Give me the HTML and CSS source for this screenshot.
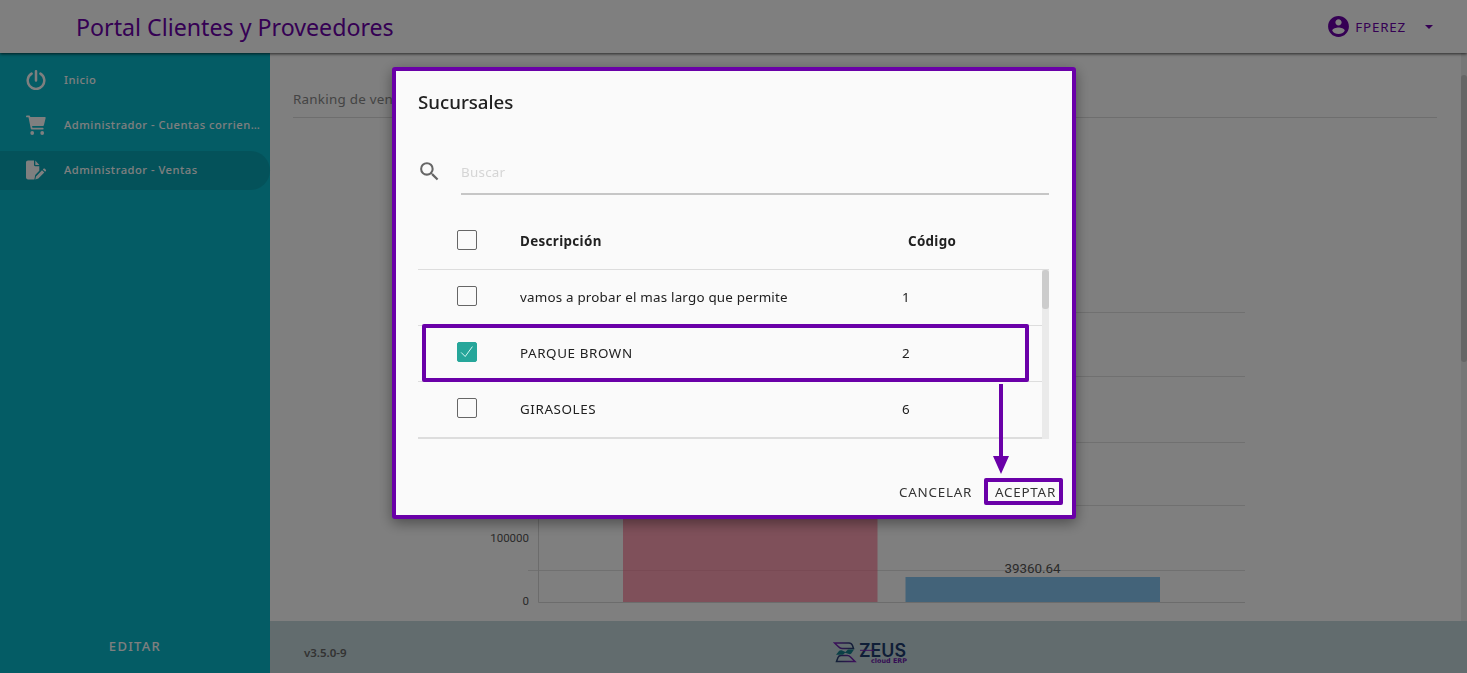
FILE: index.html
```
<!DOCTYPE html>
<html lang="es">
<head>
    <meta charset="UTF-8">
    <meta name="viewport" content="width=device-width, initial-scale=1.0">
    <title>Portal Clientes y Proveedores</title>
    <link rel="stylesheet" href="styles.css">
</head>
<body>
    <header class="topbar">
        <h1 class="topbar-title">Portal Clientes y Proveedores</h1>
        <div class="user-menu">
            <svg class="user-icon" viewBox="0 0 24 24"><path d="M12 2C6.48 2 2 6.48 2 12s4.48 10 10 10 10-4.48 10-10S17.52 2 12 2zm0 3c1.66 0 3 1.34 3 3s-1.34 3-3 3-3-1.34-3-3 1.34-3 3-3zm0 14.2c-2.5 0-4.71-1.28-6-3.22.03-1.99 4-3.08 6-3.08 1.99 0 5.97 1.09 6 3.08-1.29 1.94-3.5 3.22-6 3.22z"/></svg>
            <span class="user-name">FPEREZ</span>
            <svg class="caret" viewBox="0 0 8 4"><path d="M0 0h8L4 4z"/></svg>
        </div>
    </header>

    <div class="layout">
        <nav class="sidebar">
            <ul class="menu">
                <li class="menu-item">
                    <svg class="menu-icon" viewBox="0 0 20 20"><path d="M5.6 3.6A8.3 8.3 0 1 0 14.4 3.6M10 1.2v9.2" fill="none" stroke="currentColor" stroke-width="2.5" stroke-linecap="round"/></svg>
                    <span class="menu-label">Inicio</span>
                </li>
                <li class="menu-item">
                    <svg class="menu-icon" viewBox="0 0 20 20"><path d="M.9.5h2.3c.5 0 .8.3.9.8L4.300 2H18.800c.6 0 1 .6.8 1.200l-1.700 7c-.1.500-.5.800-1 .8H6.100l.3 1.800h10.300c.6 0 .9.4.9.9s-.3.9-.9.9H5.700c-.5 0-.9-.3-.9-.8L2.500 2.300H.9C.3 2.300 0 1.900 0 1.400S.3.500.9.500z"/><circle cx="6.200" cy="18" r="1.900"/><circle cx="16.200" cy="18" r="1.900"/></svg>
                    <span class="menu-label">Administrador - Cuentas corrientes</span>
                </li>
                <li class="menu-item active">
                    <svg class="menu-icon" viewBox="0 0 20 20"><path d="M2 .5h6v4.600c0 .6.5 1.100 1.100 1.100h4.200v4.500l-4.100 4.300-.8 4.500H2c-1.100 0-2-.8-2-1.900V2.500C0 1.300.9.500 2 .5z"/><path d="M9.300.5l4 4.500h-4z"/><path d="M16 10.300l2.300 2.300-6 6-3 .8.700-3zM16.800 9.500l.7-.7c.4-.4 1-.4 1.400 0l.9.9c.4.4.4 1 0 1.400l-.7.7z"/></svg>
                    <span class="menu-label">Administrador - Ventas</span>
                </li>
            </ul>
            <button class="edit-button">EDITAR</button>
        </nav>

        <div class="content">
            <div class="scroll-area">
                <main class="panel">
                    <h2 class="panel-title">Ranking de ventas</h2>
                    <svg class="chart" viewBox="0 0 780 400">
                        <g class="grid">
                            <path d="M52 93.500H769M52 157.500H769M52 223.500H769M52 286.500H769M52 351.500H769"/>
                            <path class="axis" d="M62.500 30V383.500H769"/>
                        </g>
                        <rect class="bar-pink" x="147" y="60" width="254.500" height="323"/>
                        <rect class="bar-blue" x="429.500" y="358" width="254.500" height="25"/>
                        <text class="tick" x="53" y="323" text-anchor="end">100000</text>
                        <text class="tick" x="53" y="386" text-anchor="end">0</text>
                        <text class="bar-value" x="556.500" y="354" text-anchor="middle">39360.64</text>
                    </svg>
                </main>
                <div class="page-scrollbar"><div class="page-thumb"></div></div>
            </div>
            <footer class="footer">
                <span class="version">v3.5.0-9</span>
                <svg class="logo" viewBox="0 0 76 24">
                    <defs>
                        <linearGradient id="mark" x1="0" x2="1">
                            <stop offset="0" stop-color="#7a1fb8"/>
                            <stop offset="1" stop-color="#25406e"/>
                        </linearGradient>
                        <linearGradient id="mark-end" x1="0" x2="1">
                            <stop offset="0" stop-color="#25406e"/>
                            <stop offset="1" stop-color="#7a1fb8"/>
                        </linearGradient>
                    </defs>
                    <path d="M1.500 2H16q2.500 0 3.500 2.500l1 3H9q-2 0-3.500-1.700z" fill="none" stroke="url(#mark)" stroke-width="1.500"/>
                    <path d="M3.500 20.500L5 16.500q.8-2 3-2h6.500q1.500 0 3 1.500l4.500 4.500z" fill="none" stroke="url(#mark-end)" stroke-width="1.500"/>
                    <path d="M3 13.700l3-3.700q1-1 2.500-.7l4 1.700 2.500-2.500h6l-2.500 3.700q-1 1.300-2.500.8l-4-1.200-2 1.900z" fill="#16808c"/>
                    <text class="logo-name" x="26" y="16" textLength="47" lengthAdjust="spacingAndGlyphs">ZEUS</text>
                    <path d="M27 9.300h14" stroke="#7a1fb8" stroke-width="1"/>
                    <text class="logo-sub" x="38" y="21.500" textLength="36" lengthAdjust="spacingAndGlyphs">cloud ERP</text>
                </svg>
            </footer>
        </div>
    </div>

    <div class="overlay">
        <div class="dialog">
            <h3 class="dialog-title">Sucursales</h3>
            <div class="search">
                <svg class="search-icon" viewBox="0 0 24 24"><path d="M15.500 14h-.79l-.28-.27A6.471 6.471 0 0 0 16 9.500 6.500 6.500 0 1 0 9.500 16c1.610 0 3.090-.59 4.230-1.570l.27.28v.79l5 4.990L20.490 19l-4.990-5zm-6 0C7.010 14 5 11.990 5 9.500S7.010 5 9.500 5 14 7.010 14 9.500 11.990 14 9.500 14z"/></svg>
                <div class="search-field">Buscar</div>
            </div>

            <div class="row row-head">
                <i class="check"></i>
                <span class="desc">Descripción</span>
                <span class="code">Código</span>
            </div>
            <div class="rows">
                <div class="rows-list">
                    <div class="row">
                        <i class="check"></i>
                        <span class="desc">vamos a probar el mas largo que permite</span>
                        <span class="code">1</span>
                    </div>
                    <div class="row">
                        <i class="check checked"><svg viewBox="0 0 20 20"><path d="M3.500 10.500l4.500 4.500 8-11"/></svg></i>
                        <span class="desc upper">PARQUE BROWN</span>
                        <span class="code">2</span>
                    </div>
                    <div class="row">
                        <i class="check"></i>
                        <span class="desc upper">GIRASOLES</span>
                        <span class="code">6</span>
                    </div>
                </div>
                <div class="rows-scrollbar"><div class="rows-thumb"></div></div>
            </div>

            <div class="actions">
                <button class="action">CANCELAR</button>
                <button class="action">ACEPTAR</button>
            </div>

            <div class="mark mark-row"></div>
            <svg class="mark-arrow" viewBox="0 0 16 92"><path d="M6 2h4v72h6L8 92 0 74h6z"/></svg>
            <div class="mark mark-accept"></div>
        </div>
    </div>
</body>
</html>
```
FILE: styles.css
```
* {
    box-sizing: border-box;
}

body {
    margin: 0;
    height: 100vh;
    display: flex;
    flex-direction: column;
    overflow: hidden;
    font-family: "Noto Sans", sans-serif;
    font-size: 13.4px;
    color: #212121;
    background-color: #fff;
}

h1, h2, h3, ul {
    margin: 0;
    padding: 0;
}

button {
    padding: 0;
    border: none;
    background: none;
    font-family: inherit;
    cursor: pointer;
}

/* Barra superior */
.topbar {
    flex: none;
    height: 53px;
    display: flex;
    align-items: center;
    justify-content: space-between;
    padding: 0 34px 0 76px;
    color: #6a00a8;
    background-color: #fff;
    box-shadow: 0 1px 3px rgba(0, 0, 0, 0.7);
    z-index: 1;
}

.topbar-title {
    padding-top: 1px;
    font-size: 23.2px;
    font-weight: 400;
}

.user-menu {
    display: flex;
    align-items: center;
}

.user-icon {
    width: 25px;
    height: 25px;
    margin-right: 4px;
    fill: currentColor;
}

.user-name {
    letter-spacing: 0.8px;
}

.caret {
    width: 8px;
    height: 4px;
    margin-left: 19px;
    fill: currentColor;
}

.layout {
    flex: 1;
    min-height: 0;
    display: flex;
}

/* Menu lateral */
.sidebar {
    flex: none;
    width: 270px;
    display: flex;
    flex-direction: column;
    justify-content: space-between;
    padding: 8px 0 15px;
    color: #fff;
    background-color: #09b8ca;
}

.menu {
    display: flex;
    flex-direction: column;
    gap: 6px;
    list-style: none;
}

.menu-item {
    height: 39px;
    display: flex;
    align-items: center;
    padding: 0 6px 2px 26px;
    border-radius: 0 20px 20px 0;
}

.menu-item.active {
    background-color: #08a5b5;
}

.menu-icon {
    flex: none;
    width: 20px;
    height: 20px;
    margin-right: 18px;
    fill: currentColor;
}

.menu-label {
    overflow: hidden;
    white-space: nowrap;
    text-overflow: ellipsis;
    font-size: 11.2px;
    font-weight: 500;
    letter-spacing: 0.5px;
}

.edit-button {
    height: 24px;
    color: #fff;
    font-size: 13px;
    font-weight: 500;
    letter-spacing: 1.3px;
}

/* Contenido */
.content {
    flex: 1;
    min-width: 0;
    display: flex;
    flex-direction: column;
}

.scroll-area {
    flex: 1;
    min-height: 0;
    display: flex;
}

.panel {
    flex: 1;
    padding: 31px 24px 0 23px;
    overflow: hidden;
}

.panel-title {
    height: 34px;
    line-height: 30px;
    border-bottom: 1px solid #ddd;
    font-size: 13.4px;
    font-weight: 400;
    letter-spacing: 0.25px;
    color: #888;
}

.chart {
    display: block;
    width: 780px;
    height: 400px;
    margin: 101px 0 0 183px;
}

.grid path {
    fill: none;
    stroke: #e0e0e0;
}

.grid .axis {
    stroke: #d8d8d8;
}

.bar-pink {
    fill: rgba(255, 99, 132, 0.6);
}

.bar-blue {
    fill: rgba(54, 162, 235, 0.6);
}

.tick,
.bar-value {
    font-family: Roboto, sans-serif;
    font-size: 11.5px;
    fill: #555;
}

.bar-value {
    font-size: 13.4px;
}

.page-scrollbar {
    width: 6px;
    padding-top: 22px;
    background-color: #eee;
}

.page-thumb {
    height: 287px;
    border-radius: 3px;
    background-color: #ccc;
}

.footer {
    flex: none;
    height: 52px;
    display: flex;
    align-items: center;
    padding: 11px 0 0 34px;
    background-color: #c5d9dc;
}

.version {
    width: 529px;
    font-size: 11.5px;
    font-weight: 600;
    color: #666;
}

.logo {
    width: 76px;
    height: 24px;
}

.logo-name {
    font-family: Inter, sans-serif;
    font-size: 18px;
    font-weight: 600;
    fill: #1f3c6e;
}

.logo-sub {
    font-family: "DejaVu Sans", sans-serif;
    font-size: 6.5px;
    font-weight: 700;
    fill: #6a1ba8;
}

/* Dialogo de sucursales */
.overlay {
    position: fixed;
    inset: 0;
    display: flex;
    justify-content: center;
    align-items: flex-start;
    padding: 67px 0 0 1px;
    background-color: rgba(0, 0, 0, 0.5);
    z-index: 10;
}

.dialog {
    position: relative;
    width: 684px;
    height: 452px;
    padding: 15px 23px 0 22px;
    border: 4px solid #6a00a8;
    border-radius: 3px;
    background-color: #fafafa;
    box-shadow: 0 4px 14px rgba(0, 0, 0, 0.4);
}

.dialog-title {
    height: 65px;
    line-height: 31px;
    font-size: 18.7px;
    font-weight: 500;
}

.search {
    height: 44px;
    display: flex;
    align-items: center;
}

.search-icon {
    width: 25px;
    height: 25px;
    margin: -3px 19px 0 -1px;
    fill: #666;
}

.search-field {
    flex: 1;
    height: 44px;
    line-height: 42px;
    border-bottom: 2px solid #c6c6c6;
    letter-spacing: 0.25px;
    color: #d5d5d5;
}

.row {
    height: 56px;
    display: flex;
    align-items: center;
    padding: 0 0 2px 39px;
    border-bottom: 1px solid #ddd;
}

.row-head {
    margin-top: 19px;
    font-weight: 700;
    letter-spacing: 0.3px;
}

.check {
    width: 20px;
    height: 20px;
    margin: -1px 43px 0 0;
    border: 1px solid #666;
    border-radius: 2px;
}

.check.checked {
    border-color: #26a69a;
    background-color: #26a69a;
}

.check svg {
    display: block;
    width: 18px;
    height: 18px;
    fill: none;
    stroke: #e8fffc;
}

.desc {
    width: 382px;
    letter-spacing: 0.2px;
}

.desc.upper {
    letter-spacing: 0.6px;
}

.row-head .desc {
    letter-spacing: 0.35px;
}

.row-head .code {
    margin-left: 6px;
}

.rows {
    display: flex;
    height: 169px;
}

.rows-list {
    flex: 1;
    border-bottom: 1px solid #ddd;
}

.rows-scrollbar {
    width: 7px;
    background-color: #eaeaea;
}

.rows-thumb {
    height: 39px;
    border-radius: 3px;
    background-color: #ccc;
}

.actions {
    height: 106px;
    display: flex;
    align-items: center;
    justify-content: flex-end;
    gap: 23px;
    margin-right: -7px;
    padding-bottom: 1px;
}

.action {
    font-size: 13.4px;
    letter-spacing: 0.75px;
    color: #333;
}

/* Marcas de la guia */
.mark {
    position: absolute;
    border: 4px solid #6a00a8;
    border-radius: 2px;
}

.mark-row {
    left: 26px;
    top: 253px;
    width: 607px;
    height: 58px;
}

.mark-arrow {
    position: absolute;
    left: 597px;
    top: 311px;
    width: 16px;
    height: 92px;
    fill: #6a00a8;
}

.mark-accept {
    left: 588px;
    top: 407px;
    width: 79px;
    height: 27px;
}
```
